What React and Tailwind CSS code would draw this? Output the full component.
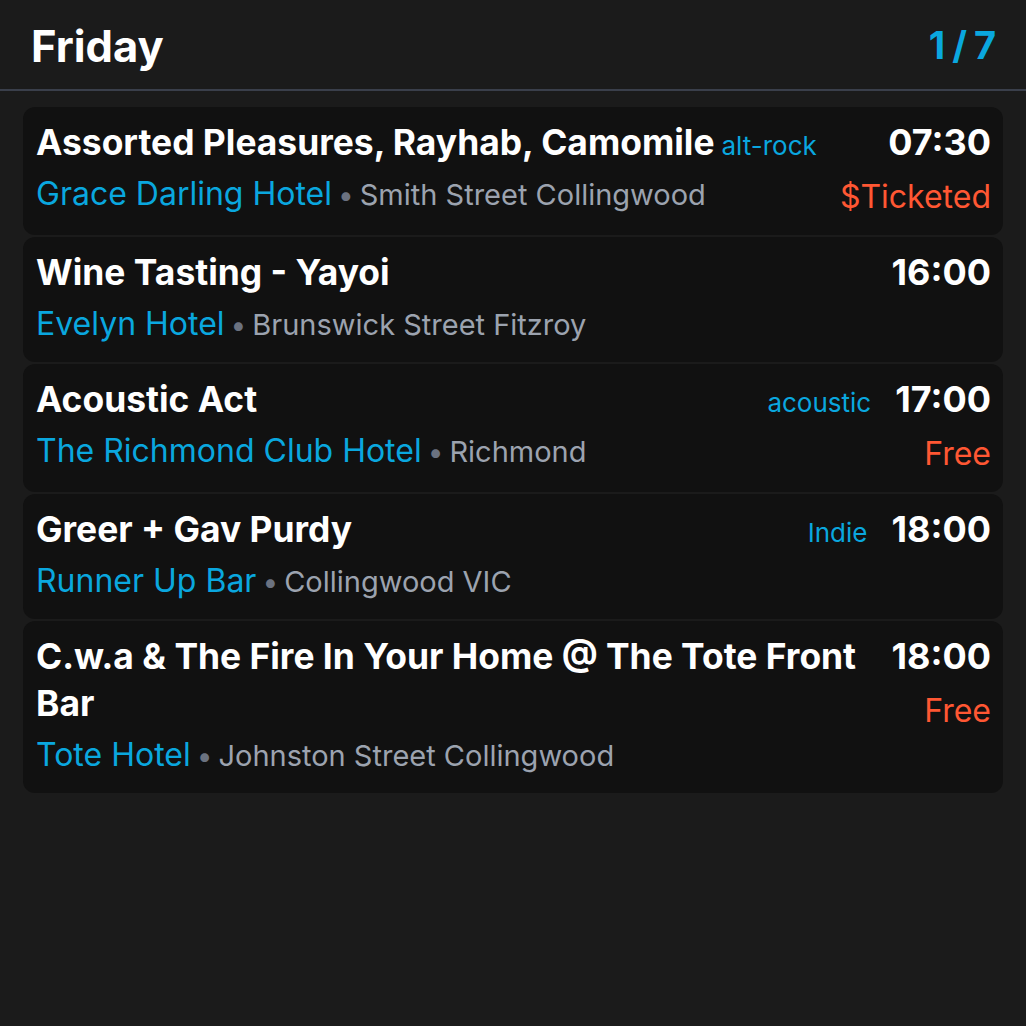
import React from "react";

const events = [
  {
    title: "Assorted Pleasures, Rayhab, Camomile",
    genre: "alt-rock",
    inlineGenre: true,
    venue: "Grace Darling Hotel",
    location: "Smith Street Collingwood",
    time: "07:30",
    price: "$Ticketed",
  },
  {
    title: "Wine Tasting - Yayoi",
    venue: "Evelyn Hotel",
    location: "Brunswick Street Fitzroy",
    time: "16:00",
  },
  {
    title: "Acoustic Act",
    genre: "acoustic",
    venue: "The Richmond Club Hotel",
    location: "Richmond",
    time: "17:00",
    price: "Free",
  },
  {
    title: "Greer + Gav Purdy",
    genre: "Indie",
    venue: "Runner Up Bar",
    location: "Collingwood VIC",
    time: "18:00",
  },
  {
    title: "C.w.a & The Fire In Your Home @ The Tote Front Bar",
    venue: "Tote Hotel",
    location: "Johnston Street Collingwood",
    time: "18:00",
    price: "Free",
  },
];

const EventCard = ({ ev }) => (
  <div className="flex bg-[#111111] rounded-[12px] pl-[13px] pr-[12px] pt-[12px] pb-[12px]">
    {/* Left: title + venue */}
    <div className="flex-1 min-w-0 pr-[20px]">
      <div className="flex items-baseline">
        <div className="flex-1 text-[35.4px] leading-[47px] font-bold text-white">
          {ev.title}
          {ev.genre && ev.inlineGenre && (
            <span className="ml-[7px] text-[26px] leading-none font-normal text-[#0aa7df] whitespace-nowrap">
              {ev.genre}
            </span>
          )}
        </div>
        {ev.genre && !ev.inlineGenre && (
          <span className="mr-[4px] text-[26px] leading-none font-normal text-[#0aa7df] whitespace-nowrap">
            {ev.genre}
          </span>
        )}
      </div>
      <div className="mt-[1px] text-[32px] leading-[53px] whitespace-nowrap">
        <span className="text-[#0aa7df]">{ev.venue}</span>
        <span className="mx-[6px] text-[28px] leading-none text-[#6b7280]">•</span>
        <span className="text-[29px] leading-none text-[#9ca3af]">{ev.location}</span>
      </div>
    </div>

    {/* Right: time + price */}
    <div className="flex flex-col items-end shrink-0">
      <div className="text-[36px] leading-[47px] font-bold text-white">
        {ev.time}
      </div>
      {ev.price && (
        <div className="mt-[4px] text-[32px] leading-[53px] text-[#ff5733]">
          {ev.price}
        </div>
      )}
    </div>
  </div>
);

export default function App() {
  return (
    <div
      className="min-h-[1026px] bg-[#1b1b1b]"
      style={{ fontFamily: "Inter, 'Noto Sans', sans-serif" }}
    >
      <div className="flex items-start justify-between h-[91px] pl-[31px] pr-[23px] pt-[25px] border-b-2 border-[#3a3f4b]">
        <h1 className="text-[43.5px] leading-none font-bold text-white">Friday</h1>
        <span className="mt-[1px] text-[38px] leading-none font-bold text-[#0aa7df] tracking-[7px]">
          1/7
        </span>
      </div>
      <div className="flex flex-col gap-[2px] px-[23px] pt-[16px]">
        {events.map((ev, i) => (
          <EventCard key={i} ev={ev} />
        ))}
      </div>
    </div>
  );
}
